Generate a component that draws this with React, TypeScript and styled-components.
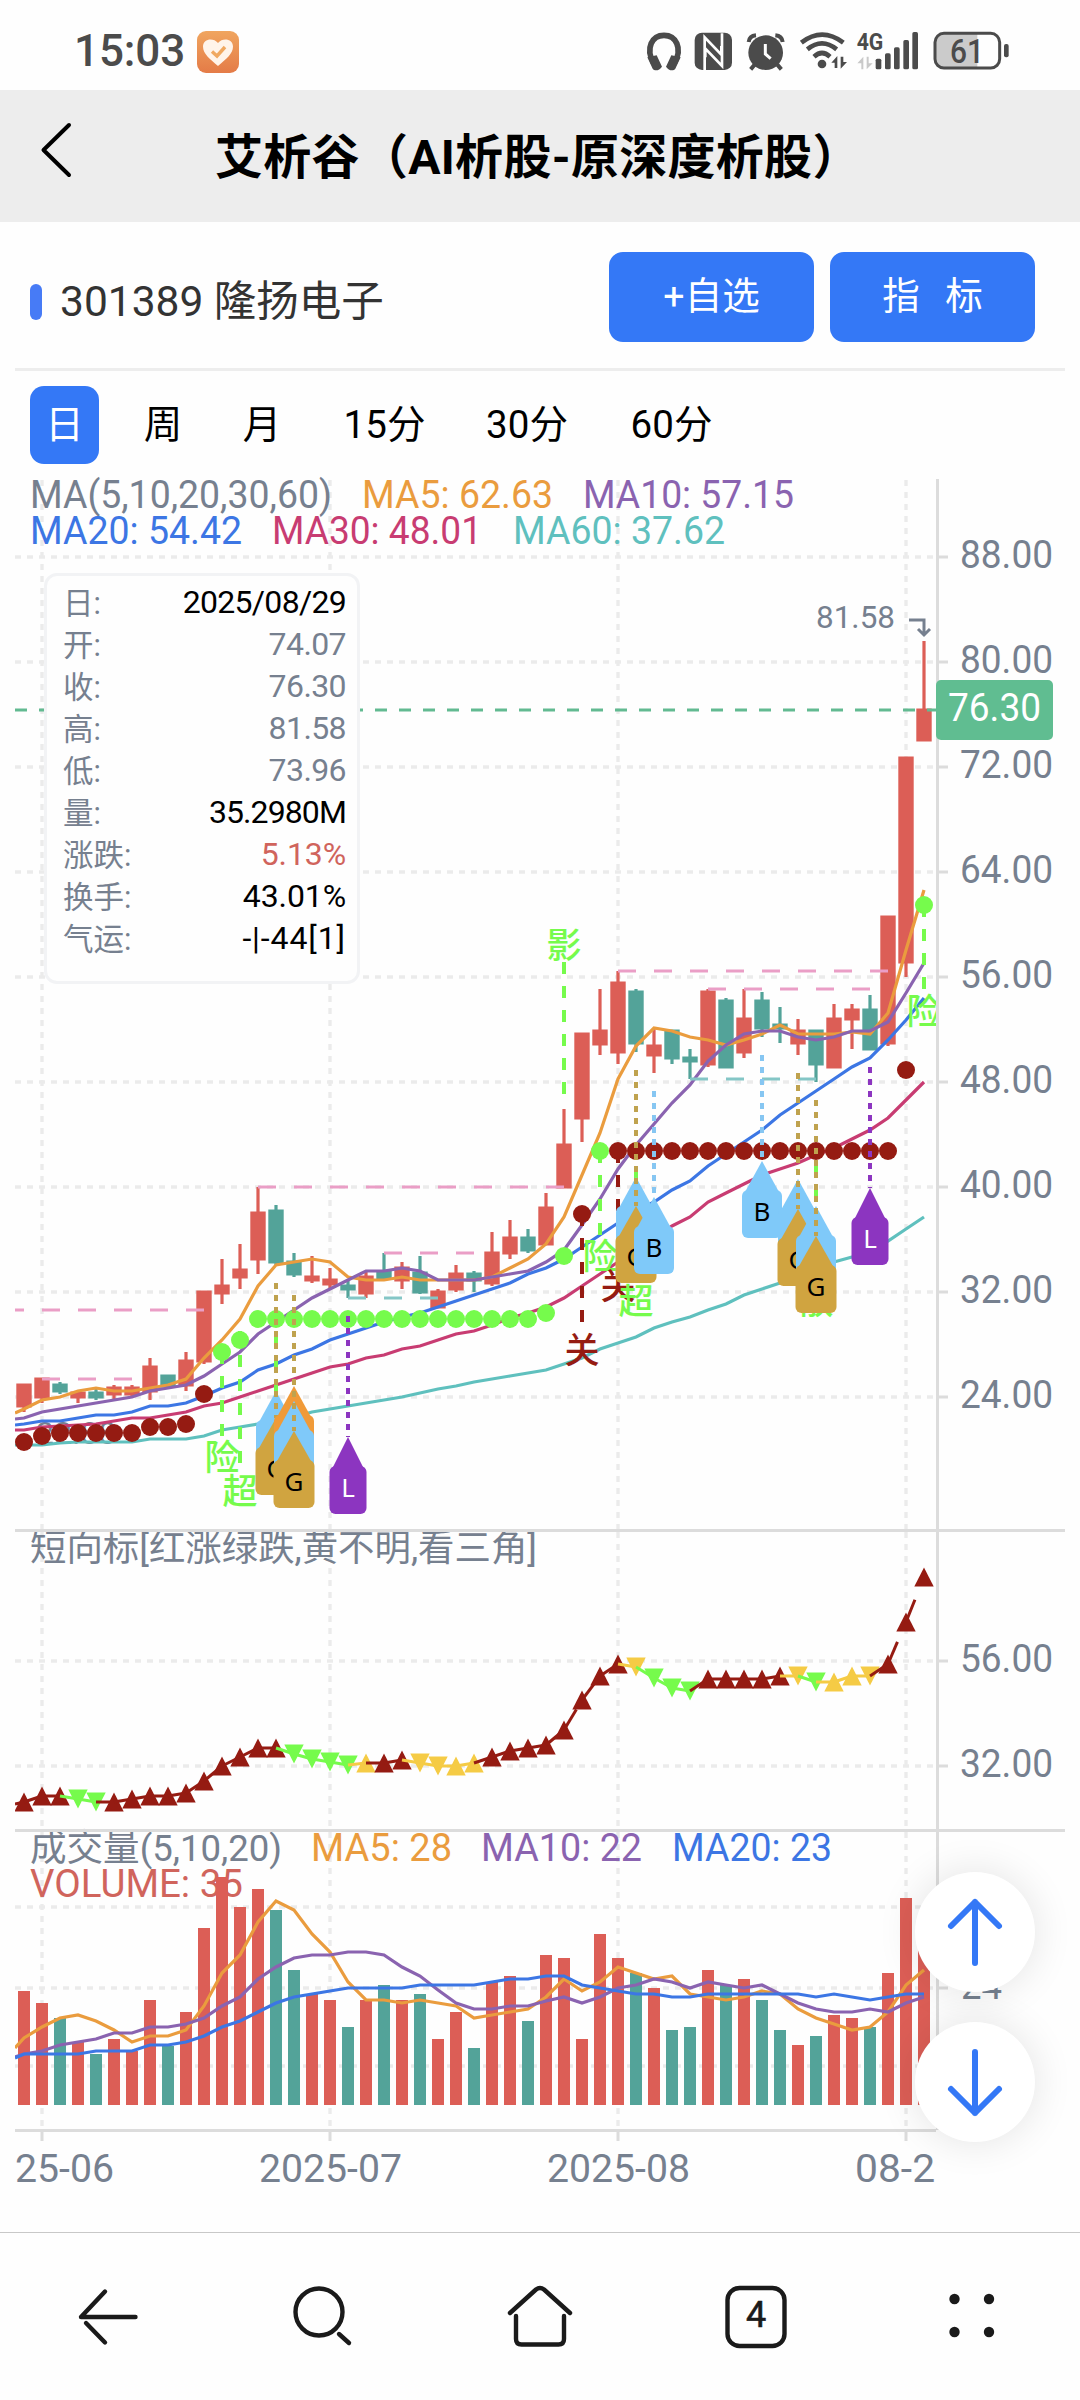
import React from "react";
import styled, { createGlobalStyle } from "styled-components";

const FONT = 'Roboto, "Noto Sans CJK SC", sans-serif';
const RED = "#dc5e56";
const GREEN = "#53a399";
const GRAY = "#76808f";
const BLUE = "#3478f6";
const ORANGE = "#ea9c3e";
const PURPLE = "#8a63b0";
const LINE_BLUE = "#3c76e4";
const MAGENTA = "#c83c72";
const TEAL = "#5fc0be";
const DARK_RED = "#951b12";
const LIME = "#76fb4c";
const YELLOW = "#f5cb45";
const INK = "#4b4b4b";

const GlobalStyle = createGlobalStyle`
  * { box-sizing: border-box; }
  body { margin: 0; background: #fefefe; }
`;

const Page = styled.div`
  width: 1080px;
  height: 2400px;
  display: flex;
  flex-direction: column;
  overflow: hidden;
  background: #fefefe;
  font-family: ${FONT};
  color: #000;
`;

/* ---------- status bar ---------- */

const StatusBar = styled.header`
  height: 90px;
  flex: none;
  display: flex;
  align-items: flex-start;
  justify-content: space-between;
  padding: 31px 70px 0 74px;
`;

const StatusLeft = styled.div`
  display: flex;
  align-items: center;
  gap: 12px;
  height: 41px;
`;

const Clock = styled.span`
  font-size: 44px;
  line-height: 41px;
  font-weight: 500;
  letter-spacing: -0.1px;
  color: ${INK};
`;

const StatusIcons = styled.svg`
  width: 380px;
  height: 64px;
  margin: -11px -6px 0 0;
`;

/* ---------- title bar ---------- */

const TitleBar = styled.div`
  height: 132px;
  flex: none;
  display: flex;
  align-items: center;
  background: #ededed;
`;

const BackIcon = styled.svg`
  width: 40px;
  height: 60px;
  margin: -13px 0 0 36px;
  flex: none;
`;

const Title = styled.h1`
  margin: 3px 0 0 139px;
  font-size: 48px;
  line-height: 60px;
  font-weight: 700;
  letter-spacing: 0.3px;
  white-space: nowrap;
`;

/* ---------- stock row ---------- */

const StockRow = styled.section`
  height: 149px;
  flex: none;
  margin: 0 15px;
  padding: 30px 30px 0 15px;
  display: flex;
  align-items: flex-start;
  border-bottom: 3px solid #ededed;
`;

const StockName = styled.div`
  flex: 1;
  display: flex;
  align-items: center;
  gap: 18px;
  height: 100px;
  color: #333;
  &::before {
    content: "";
    width: 12px;
    height: 36px;
    border-radius: 6px;
    background: #477bf6;
  }
`;

const StockText = styled.span`
  font-size: 42.5px;
  line-height: 60px;
  white-space: pre;
`;

const ActionButton = styled.button<{ $gap?: number }>`
  width: 205px;
  height: 90px;
  margin-left: 16px;
  padding: 0 0 10px;
  border: 0;
  border-radius: 14px;
  background: ${BLUE};
  color: #fff;
  font-family: inherit;
  font-size: 37.5px;
  word-spacing: ${(p) => p.$gap ?? 0}px;
`;

/* ---------- period tabs ---------- */

const Tabs = styled.nav`
  height: 101px;
  flex: none;
  display: flex;
  align-items: flex-start;
  padding: 15px 0 0 30px;
`;

const Tab = styled.button<{ $active?: boolean; $w: number }>`
  width: ${(p) => p.$w}px;
  height: 78px;
  padding: 0 0 8px;
  border: 0;
  border-radius: 14px;
  background: ${(p) => (p.$active ? BLUE : "transparent")};
  color: ${(p) => (p.$active ? "#fff" : "#000")};
  font-family: inherit;
  font-size: 38.5px;
`;

/* ---------- chart ---------- */

const ChartArea = styled.main`
  position: relative;
  height: 1760px;
  flex: none;
`;

const ChartSvg = styled.svg`
  display: block;
  width: 1080px;
  height: 1760px;
  font-family: ${FONT};
`;

const Tooltip = styled.dl`
  position: absolute;
  left: 44px;
  top: 101px;
  width: 316px;
  height: 411px;
  margin: 0;
  padding: 5px 11px 0 16px;
  border: 3px solid #f2f3f5;
  border-radius: 13px;
  background: #fefefe;
`;

const TipRow = styled.div`
  display: flex;
  justify-content: space-between;
  align-items: center;
  height: 42px;
`;

const TipLabel = styled.dt`
  padding-bottom: 2px;
  font-size: 30.5px;
  color: ${GRAY};
`;

const TipValue = styled.dd<{ $color: string; $spacing?: number }>`
  margin: 0;
  font-size: 32px;
  letter-spacing: ${(p) => p.$spacing ?? -0.6}px;
  color: ${(p) => p.$color};
`;

const FloatButton = styled.button<{ $top: number }>`
  position: absolute;
  left: 915px;
  top: ${(p) => p.$top}px;
  width: 120px;
  height: 120px;
  padding: 0;
  border: 0;
  border-radius: 50%;
  background: #fff;
  box-shadow: 0 0 40px rgba(0, 0, 0, 0.11);
  svg {
    display: block;
    width: 120px;
    height: 120px;
  }
`;

/* ---------- browser navigation ---------- */

const BottomNav = styled.nav`
  height: 168px;
  flex: none;
  border-top: 1px solid #c8c8c8;
  display: flex;
  justify-content: space-around;
  padding: 44px 0 0;
`;

const NavIcon = styled.svg`
  width: 80px;
  height: 80px;
  fill: none;
  stroke: #1a1a1a;
  stroke-width: 4.4;
  stroke-linecap: round;
  stroke-linejoin: round;
  font-family: ${FONT};
`;

/* ---------- data ---------- */

const cx = (i: number) => 24 + 18 * i;

type Candle = [up: 0 | 1, top: number, bottom: number, high: number, low: number];

const candles: Candle[] = [
  [1, 1384, 1407, 1384, 1412], [1, 1378, 1398, 1378, 1403], [0, 1384, 1392, 1382, 1394],
  [1, 1392, 1398, 1390, 1403], [0, 1392, 1398, 1388, 1400], [1, 1387, 1395, 1385, 1399],
  [1, 1387, 1395, 1385, 1397], [1, 1366, 1392, 1358, 1400], [0, 1375, 1387, 1375, 1387],
  [1, 1360, 1386, 1352, 1391], [1, 1291, 1362, 1291, 1364], [1, 1285, 1294, 1259, 1304],
  [1, 1269, 1278, 1244, 1289], [1, 1212, 1260, 1187, 1274], [0, 1210, 1263, 1205, 1265],
  [0, 1261, 1275, 1253, 1277], [1, 1276, 1281, 1256, 1283], [1, 1279, 1285, 1268, 1289],
  [0, 1285, 1290, 1280, 1298], [1, 1276, 1294, 1272, 1298], [0, 1271, 1279, 1253, 1280],
  [1, 1267, 1281, 1262, 1289], [0, 1272, 1293, 1256, 1294], [1, 1291, 1308, 1289, 1308],
  [1, 1273, 1290, 1265, 1292], [0, 1273, 1281, 1271, 1292], [1, 1252, 1284, 1232, 1286],
  [1, 1237, 1254, 1220, 1259], [0, 1237, 1251, 1229, 1253], [1, 1207, 1245, 1193, 1245],
  [1, 1144, 1188, 1109, 1188], [1, 1033, 1119, 1033, 1142], [1, 1030, 1045, 989, 1055],
  [1, 982, 1053, 971, 1064], [0, 991, 1044, 989, 1052], [1, 1045, 1056, 1028, 1073],
  [0, 1030, 1059, 1030, 1064], [0, 1057, 1062, 1049, 1079], [1, 991, 1065, 989, 1067],
  [0, 1000, 1068, 998, 1068], [1, 1018, 1053, 989, 1058], [0, 1000, 1029, 992, 1037],
  [0, 1024, 1029, 1007, 1043], [1, 1030, 1044, 1019, 1055], [0, 1030, 1065, 1030, 1082],
  [1, 1018, 1068, 1004, 1068], [1, 1009, 1020, 1004, 1049], [0, 1009, 1050, 995, 1050],
  [1, 916, 1044, 916, 1046], [1, 757, 963, 757, 977], [1, 709, 741, 641, 741],
];

// The first value of each series lies on the plot's left edge, the rest on candle centres.
const priceLines: [string, number[]][] = [
  [TEAL, [1445, 1445, 1445, 1443, 1442, 1442, 1442, 1442, 1439, 1439, 1439, 1436, 1430, 1427, 1424, 1421, 1417, 1412, 1409, 1406, 1403, 1400, 1397, 1393, 1389, 1386, 1382, 1379, 1376, 1373, 1370, 1364, 1358, 1349, 1343, 1337, 1328, 1322, 1317, 1310, 1304, 1295, 1289, 1283, 1277, 1269, 1262, 1257, 1250, 1241, 1229, 1217]],
  [MAGENTA, [1430, 1430, 1427, 1426, 1425, 1424, 1421, 1418, 1418, 1415, 1412, 1406, 1403, 1397, 1391, 1385, 1379, 1373, 1367, 1364, 1358, 1355, 1349, 1346, 1340, 1334, 1331, 1325, 1318, 1313, 1307, 1298, 1286, 1274, 1262, 1250, 1238, 1226, 1217, 1202, 1193, 1184, 1175, 1169, 1163, 1155, 1148, 1139, 1130, 1118, 1100, 1082]],
  [LINE_BLUE, [1425, 1424, 1421, 1421, 1418, 1415, 1415, 1412, 1406, 1406, 1403, 1396, 1388, 1382, 1370, 1364, 1355, 1349, 1340, 1334, 1328, 1322, 1317, 1313, 1307, 1301, 1295, 1289, 1283, 1274, 1268, 1259, 1247, 1235, 1223, 1211, 1202, 1190, 1181, 1166, 1154, 1142, 1130, 1115, 1103, 1091, 1079, 1067, 1058, 1040, 1020, 998]],
  [ORANGE, [1413, 1409, 1400, 1397, 1391, 1388, 1391, 1391, 1388, 1385, 1379, 1358, 1340, 1319, 1286, 1265, 1262, 1259, 1262, 1277, 1280, 1280, 1277, 1280, 1280, 1280, 1280, 1277, 1268, 1259, 1244, 1217, 1175, 1133, 1079, 1046, 1028, 1031, 1037, 1040, 1045, 1040, 1034, 1025, 1034, 1034, 1034, 1032, 1034, 1013, 950, 890]],
  [PURPLE, [1419, 1418, 1412, 1409, 1406, 1403, 1400, 1397, 1391, 1388, 1385, 1376, 1364, 1352, 1334, 1322, 1310, 1298, 1289, 1280, 1271, 1271, 1268, 1271, 1280, 1280, 1280, 1277, 1274, 1271, 1262, 1250, 1225, 1199, 1169, 1145, 1124, 1103, 1085, 1061, 1045, 1034, 1031, 1031, 1037, 1040, 1037, 1031, 1031, 1022, 993, 963]],
];

const dots: [string, number, number, number][] = [
  [DARK_RED, 0, 0, 1442], [DARK_RED, 1, 1, 1436], [DARK_RED, 2, 6, 1433], [DARK_RED, 7, 8, 1427],
  [DARK_RED, 9, 9, 1424], [DARK_RED, 10, 10, 1394], [LIME, 11, 11, 1352], [LIME, 12, 12, 1340],
  [LIME, 13, 28, 1319], [LIME, 29, 29, 1313], [LIME, 30, 30, 1256], [DARK_RED, 31, 31, 1214],
  [LIME, 32, 32, 1151], [DARK_RED, 33, 48, 1151], [DARK_RED, 49, 49, 1070], [LIME, 50, 50, 905],
];

const levels: [string, number, number, number][] = [
  ["#ea9ec6", 1310, 6, 204], ["#ea9ec6", 1379, 42, 132], ["#ea9ec6", 1187, 258, 564],
  ["#ea9ec6", 1253, 384, 474], ["#ea9ec6", 971, 618, 888], ["#ea9ec6", 989, 708, 870],
  ["#84c6c6", 1298, 348, 438], ["#84c6c6", 1079, 690, 816],
];

type Signal = [color: string, i: number, from: number, to: number, char: string, charY: number];

const signals: Signal[] = [
  [LIME, 11, 1352, 1437, "险", 1457], [LIME, 12, 1331, 1463, "超", 1491], [LIME, 14, 1331, 1391, "", 0],
  [LIME, 30, 962, 1095, "影", 945], [DARK_RED, 31, 1214, 1323, "关", 1350], [LIME, 32, 1151, 1235, "险", 1256],
  [DARK_RED, 33, 1151, 1260, "关", 1286], [LIME, 34, 1148, 1180, "超", 1301], [LIME, 44, 1160, 1210, "散", 1301],
  [LIME, 50, 905, 990, "险", 1011],
];

const SKY = "#7fc9f9";
const GOLD = "#d0a440";
const GOLD_LINE = "#bfa24e";
const VIOLET = "#8c35c0";

type Flag = { i: number; from: number; line: string; tags: [string, number, string][] };

const flags: Flag[] = [
  { i: 14, from: 1283, line: GOLD_LINE, tags: [[SKY, 1391, ""], [GOLD, 1418, "G"]] },
  { i: 15, from: 1295, line: GOLD_LINE, tags: [["#f09a38", 1386, ""], [SKY, 1401, ""], [GOLD, 1431, "G"]] },
  { i: 18, from: 1316, line: VIOLET, tags: [[VIOLET, 1437, "L"]] },
  { i: 34, from: 1070, line: GOLD_LINE, tags: [[SKY, 1177, ""], [GOLD, 1206, "G"]] },
  { i: 35, from: 1091, line: "#86c6f2", tags: [[SKY, 1197, "B"]] },
  { i: 41, from: 1055, line: "#86c6f2", tags: [[SKY, 1161, "B"]] },
  { i: 43, from: 1073, line: GOLD_LINE, tags: [[SKY, 1179, ""], [GOLD, 1209, "G"]] },
  { i: 44, from: 1100, line: GOLD_LINE, tags: [[SKY, 1206, ""], [GOLD, 1236, "G"]] },
  { i: 47, from: 1067, line: VIOLET, tags: [[VIOLET, 1188, "L"]] },
];

// r/g/y: line colour, upper case for a triangle that points down.
const trendKinds = "rrrGGrrrrrrrrrrGGGGyrrYYyyrrrrrrrrYGGGrrrrrYGyyYrrr";
const trendY = [
  1802, 1796, 1796, 1799, 1802, 1802, 1799, 1796, 1796, 1793, 1781, 1766, 1757, 1748, 1748, 1754, 1759,
  1762, 1765, 1763, 1763, 1760, 1763, 1766, 1766, 1763, 1757, 1751, 1748, 1745, 1730, 1700, 1676, 1664,
  1667, 1678, 1688, 1691, 1679, 1679, 1679, 1679, 1676, 1676, 1682, 1682, 1676, 1676, 1664, 1622, 1577,
];
const trendColor: Record<string, string> = { r: DARK_RED, g: LIME, y: YELLOW };

const volumeTops = [
  1991, 2003, 2018, 2042, 2054, 2039, 2051, 2000, 2046, 2012, 1928, 1877, 1907, 1889, 1910, 1970, 1994,
  2000, 2027, 2000, 1985, 2000, 1994, 2039, 2012, 2048, 1982, 1976, 2021, 1955, 1958, 2039, 1934, 1958,
  1973, 1988, 2030, 2027, 1970, 1985, 1979, 2000, 2030, 2045, 2036, 2015, 2018, 2027, 1973, 1898, 1934,
];
const volumeKinds = "rrgrgrrrgrrrrrggrrgrgrgrrgrrgrrrrrgrggrgrggrgrrgrrr";

const volumeLines: [string, number[]][] = [
  [ORANGE, [2048, 2038, 2027, 2018, 2015, 2021, 2030, 2042, 2036, 2036, 2030, 2006, 1973, 1955, 1922, 1901, 1910, 1934, 1952, 1982, 2000, 2000, 2003, 2000, 2003, 2006, 2018, 2015, 2012, 2009, 1997, 1979, 1991, 1982, 1967, 1973, 1979, 1976, 1994, 1997, 2000, 1997, 1991, 1994, 2009, 2018, 2024, 2030, 2027, 2012, 1985, 1970]],
  [PURPLE, [2057, 2054, 2051, 2045, 2042, 2039, 2033, 2033, 2027, 2027, 2024, 2018, 2006, 1997, 1979, 1967, 1958, 1955, 1955, 1952, 1952, 1955, 1967, 1976, 1990, 2003, 2009, 2009, 2006, 2006, 2001, 1997, 2003, 1997, 1988, 1985, 1979, 1982, 1988, 1982, 1985, 1988, 1985, 1994, 2003, 2009, 2012, 2012, 2009, 2012, 2003, 1997]],
  [LINE_BLUE, [2058, 2054, 2054, 2054, 2054, 2051, 2051, 2051, 2045, 2045, 2042, 2036, 2027, 2021, 2012, 2003, 1997, 1994, 1991, 1988, 1988, 1988, 1988, 1985, 1985, 1985, 1985, 1982, 1979, 1979, 1976, 1976, 1985, 1988, 1991, 1994, 1994, 1997, 1997, 1994, 1994, 1994, 1994, 1994, 1994, 1997, 1994, 1997, 2000, 1997, 1994, 1994]],
];

const tipRows: [label: string, value: string, color: string, spacing?: number][] = [
  ["日:", "2025/08/29", "#000", -0.7],
  ["开:", "74.07", GRAY],
  ["收:", "76.30", GRAY],
  ["高:", "81.58", GRAY],
  ["低:", "73.96", GRAY],
  ["量:", "35.2980M", "#000", -0.9],
  ["涨跌:", "5.13%", "#d0645c", -0.1],
  ["换手:", "43.01%", "#000", -0.1],
  ["气运:", "-|-44[1]", "#000", 0.9],
];

/* ---------- chart pieces ---------- */

const Label = ({ x0, x1, y, fill = GRAY, size = 38, children }: {
  x0: number; x1: number; y: number; fill?: string; size?: number; children: string;
}) => (
  <text x={x0 - 2} y={y} fill={fill} fontSize={size} textLength={x1 - x0 + 4} lengthAdjust="spacingAndGlyphs">
    {children}
  </text>
);

const Series = ({ color, ys }: { color: string; ys: number[] }) => (
  <polyline
    fill="none"
    stroke={color}
    strokeWidth={3.2}
    points={ys.map((y, i) => `${i === 0 ? 15 : cx(i - 1)},${y}`).join(" ")}
  />
);

const Grid = () => (
  <g stroke="#ebebeb" strokeWidth={3.4} strokeDasharray="6 6" fill="none">
    {[557, 662, 767, 872, 977, 1082, 1187, 1292, 1397, 1661, 1766, 1907, 1988, 2066].map((y) => (
      <path key={y} d={`M15 ${y}H936`} />
    ))}
    {[42, 330, 618, 906].map((x) => (
      <path key={x} d={`M${x} 480V1530M${x} 1532V1830M${x} 1832V2130`} />
    ))}
  </g>
);

const Axes = () => (
  <g stroke="#dcdcdc" strokeWidth={3} fill="none">
    <path d="M937.5 479V2130M15 1530.5H1065M15 1830.5H1065M15 2130.5H936" />
    {[557, 662, 767, 872, 977, 1082, 1187, 1292, 1397, 1661, 1766, 1988].map((y) => (
      <path key={y} d={`M939 ${y}H948`} />
    ))}
    {[42, 330, 618, 906].map((x) => (
      <path key={x} d={`M${x} 2132V2141`} />
    ))}
  </g>
);

const FlagTag = ({ x, tip, color, label }: { x: number; tip: number; color: string; label: string }) => {
  const half = color === VIOLET ? 18.5 : color === GOLD ? 20.5 : 20;
  return (
    <g>
      <path d={`M${x} ${tip}L${x + half - 3} ${tip + 31}H${x - half + 3}Z`} fill={color} />
      <rect x={x - half} y={tip + 29} width={half * 2} height={48} rx={6} fill={color} />
      <text x={x} y={tip + 60} fontSize={26} textAnchor="middle" fill={color === VIOLET ? "#fff" : "#000"}
        fontFamily='"Noto Sans", sans-serif'>
        {label}
      </text>
    </g>
  );
};

const PricePanel = () => (
  <g clipPath="url(#plot)">
    <text x={36} y={1444} fontSize={32} fill={GRAY}>22.88</text>
    {candles.map(([up, top, bottom, high, low], i) => (
      <g key={i} fill={up ? RED : GREEN}>
        <rect x={cx(i) - 1.6} y={high} width={3.2} height={low - high} />
        <rect x={cx(i) - 7.7} y={top - 0.5} width={15.4} height={bottom - top + 1} />
      </g>
    ))}
    {priceLines.map(([color, ys]) => <Series key={color} color={color} ys={ys} />)}
    {levels.map(([color, y, x0, x1]) => (
      <path key={`${y}`} d={`M${x0} ${y}H${x1}`} stroke={color} strokeWidth={3} strokeDasharray="18 18" />
    ))}
    {signals.map(([color, i, from, to]) => (
      <path key={i} d={`M${cx(i)} ${from}V${to}`} stroke={color} strokeWidth={4} strokeDasharray="12 12" />
    ))}
    {dots.map(([color, a, b, y]) =>
      Array.from({ length: b - a + 1 }, (_, k) => (
        <circle key={`${a + k}`} cx={cx(a + k)} cy={y} r={9} fill={color} />
      ))
    )}
    {signals.map(([color, i, , , char, y]) => (
      <text key={i} x={cx(i)} y={y + 13} fontSize={35} fontWeight={500} textAnchor="middle" fill={color}>{char}</text>
    ))}
    {flags.map(({ i, from, line, tags }) => {
      const last = tags[tags.length - 1];
      return (
        <g key={i}>
          {tags.slice(0, -1).map(([c, tip, l], k) => <FlagTag key={k} x={cx(i)} tip={tip} color={c} label={l} />)}
          <path d={`M${cx(i)} ${from}V${last[1]}`} stroke={line} strokeWidth={4} strokeDasharray="6 6" />
          <FlagTag x={cx(i)} tip={last[1]} color={last[0]} label={last[2]} />
        </g>
      );
    })}
  </g>
);

const LastPrice = () => (
  <g>
    <path d="M15 710H936" stroke="#62ba91" strokeWidth={3} strokeDasharray="12 12" />
    <rect x={936} y={680} width={117} height={60} rx={5} fill="#60bd91" />
    <Label x0={950} x1={1039} y={721} fill="#fff">76.30</Label>
    <Label x0={818} x1={893} y={628} size={32}>81.58</Label>
    <path d="M909 620H924V634M918 629L924 635L930 629" fill="none" stroke={GRAY} strokeWidth={3} />
  </g>
);

const TrendPanel = () => (
  <g clipPath="url(#plot)">
    {trendY.map((y, i) => {
      const kind = trendKinds[i];
      const color = trendColor[kind.toLowerCase()];
      const d = kind === kind.toUpperCase() ? -1 : 1;
      const x = cx(i);
      const px = i === 0 ? 15 : cx(i - 1);
      const py = i === 0 ? 1804 : trendY[i - 1];
      return (
        <g key={i}>
          <path d={`M${px} ${py}L${x} ${y}`} stroke={color} strokeWidth={3} strokeDasharray="24 24" />
          <path d={`M${x} ${y - 9.5 * d}L${x + 9.7} ${y + 9.5 * d}H${x - 9.7}Z`} fill={color} />
        </g>
      );
    })}
  </g>
);

const VolumePanel = () => (
  <g clipPath="url(#plot)">
    {volumeTops.map((y, i) => (
      <rect key={i} x={cx(i) - 6} y={y} width={12} height={2105 - y} fill={volumeKinds[i] === "r" ? RED : GREEN} />
    ))}
    {volumeLines.map(([color, ys]) => <Series key={color} color={color} ys={ys} />)}
  </g>
);

const Legends = () => (
  <g>
    <Label x0={32} x1={330} y={508}>MA(5,10,20,30,60)</Label>
    <Label x0={364} x1={551} y={508} fill={ORANGE}>MA5: 62.63</Label>
    <Label x0={585} x1={792} y={508} fill={PURPLE}>MA10: 57.15</Label>
    <Label x0={32} x1={240} y={544} fill={LINE_BLUE}>MA20: 54.42</Label>
    <Label x0={274} x1={480} y={544} fill={MAGENTA}>MA30: 48.01</Label>
    <Label x0={515} x1={723} y={544} fill={TEAL}>MA60: 37.62</Label>
    <Label x0={32} x1={535} y={1561} size={36}>短向标[红涨绿跌,黄不明,看三角]</Label>
    <Label x0={32} x1={280} y={1861} size={37}>成交量(5,10,20)</Label>
    <Label x0={313} x1={450} y={1861} fill={ORANGE}>MA5: 28</Label>
    <Label x0={483} x1={640} y={1861} fill={PURPLE}>MA10: 22</Label>
    <Label x0={674} x1={830} y={1861} fill={LINE_BLUE}>MA20: 23</Label>
    <Label x0={32} x1={241} y={1897} fill="#d0645c">VOLUME: 35</Label>
  </g>
);

const AxisLabels = () => (
  <g>
    {[88, 80, 72, 64, 56, 48, 40, 32, 24].map((v, k) => (
      <Label key={v} x0={962} x1={1051} y={568 + 105 * k}>{`${v}.00`}</Label>
    ))}
    <Label x0={962} x1={1051} y={1672}>56.00</Label>
    <Label x0={962} x1={1051} y={1777}>32.00</Label>
    <Label x0={963} x1={1000} y={1999}>24</Label>
    <g clipPath="url(#plot)">
      <Label x0={-27} x1={112} y={2182}>2025-06</Label>
      <Label x0={261} x1={400} y={2182}>2025-07</Label>
      <Label x0={549} x1={688} y={2182}>2025-08</Label>
      <Label x0={857} x1={956} y={2182}>08-28</Label>
    </g>
  </g>
);

const StatusGlyphs = () => (
  <StatusIcons viewBox="0 0 1140 192" fill={INK}>
    <path d="M52 128C28 84 48 46 84 46C120 46 140 84 116 128" fill="none" stroke={INK} strokeWidth={17} />
    <path d="M34 112L62 106L78 140C70 152 56 154 50 146Z M134 112L106 106L90 140C98 152 112 154 118 146Z" />
    <rect x={176} y={38} width={112} height={112} rx={22} />
    <path d="M206 150V52L256 104V78M258 40V138L208 86V112" fill="none" stroke="#fefefe" strokeWidth={8} />
    <circle cx={389} cy={98} r={52} />
    <path d="M388 72V102L404 116" fill="none" stroke="#fefefe" strokeWidth={9} />
    <path d="M338 66Q340 48 360 46M440 66Q438 48 418 46M356 134L344 148M424 134L436 148" fill="none" stroke={INK} strokeWidth={12} />
    <path d="M496 68Q558 20 622 68M514 88Q558 52 602 88M534 110Q558 88 582 110" fill="none" stroke={INK} strokeWidth={14} />
    <circle cx={558} cy={132} r={13} />
    <path d="M586 128L604 108V144H596V128ZM633 126L614 146V110H622V126Z" />
    <text x={662} y={91} fontSize={72} fontWeight={700} fontFamily={FONT} textLength={80} lengthAdjust="spacingAndGlyphs">4G</text>
    <path d="M664 130L682 110V148H676V130ZM710 130L692 148V110H698V130Z" fill="#c9c9c9" />
    <rect x={719} y={116} width={17} height={32} rx={5} />
    <rect x={747} y={100} width={17} height={48} rx={5} />
    <rect x={774} y={82} width={17} height={66} rx={5} />
    <rect x={802} y={60} width={17} height={88} rx={5} />
    <rect x={829} y={36} width={17} height={112} rx={5} />
    <path d="M1024 40H924Q898 40 898 66V118Q898 144 924 144H1024Z" fill="#cbcbcb" />
    <rect x={897} y={40} width={194} height={104} rx={27} fill="none" stroke={INK} strokeWidth={9} />
    <rect x={1104} y={72} width={14} height={40} rx={6} />
    <text x={942} y={128} fontSize={102} fontWeight={500} fontFamily={FONT} textLength={102} lengthAdjust="spacingAndGlyphs">61</text>
  </StatusIcons>
);

export default function App() {
  return (
    <Page>
      <GlobalStyle />
      <StatusBar>
        <StatusLeft>
          <Clock>15:03</Clock>
          <svg width={42} height={42} viewBox="0 0 42 42">
            <defs>
              <linearGradient id="badge" x1="0" y1="0" x2="0" y2="1">
                <stop offset="0" stopColor="#f0a55f" />
                <stop offset="1" stopColor="#e47b47" />
              </linearGradient>
            </defs>
            <rect width={42} height={42} rx={9} fill="url(#badge)" />
            <path d="M21 35C13 28 6 23 6 15.5C6 8 16 6 21 12C26 6 36 8 36 15.5C36 23 29 28 21 35Z" fill="#fff4ea" />
            <path d="M15 20.5L20 25L28 16" fill="none" stroke="#f0a860" strokeWidth={3.4} />
          </svg>
        </StatusLeft>
        <StatusGlyphs />
      </StatusBar>

      <TitleBar>
        <BackIcon viewBox="0 0 40 60" fill="none" stroke="#000" strokeWidth={4}>
          <path d="M33 5L7.500 30L33 55" strokeLinecap="round" strokeLinejoin="round" />
        </BackIcon>
        <Title>艾析谷（AI析股-原深度析股）</Title>
      </TitleBar>

      <StockRow>
        <StockName>
          <StockText>301389 隆扬电子</StockText>
        </StockName>
        <ActionButton>+自选</ActionButton>
        <ActionButton $gap={16}>指 标</ActionButton>
      </StockRow>

      <Tabs>
        <Tab $active $w={69}>日</Tab>
        <Tab $w={128}>周</Tab>
        <Tab $w={70}>月</Tab>
        <Tab $w={175}>15分</Tab>
        <Tab $w={110}>30分</Tab>
        <Tab $w={179}>60分</Tab>
      </Tabs>

      <ChartArea>
        <ChartSvg viewBox="0 472 1080 1760">
          <defs>
            <clipPath id="plot">
              <rect x={15} y={472} width={921} height={1760} />
            </clipPath>
          </defs>
          <Grid />
          <Legends />
          <Axes />
          <PricePanel />
          <LastPrice />
          <TrendPanel />
          <VolumePanel />
          <AxisLabels />
        </ChartSvg>
        <Tooltip>
          {tipRows.map(([label, value, color, spacing]) => (
            <TipRow key={label}>
              <TipLabel>{label}</TipLabel>
              <TipValue $color={color} $spacing={spacing}>{value}</TipValue>
            </TipRow>
          ))}
        </Tooltip>
        <FloatButton $top={1400} aria-label="up">
          <svg viewBox="0 0 120 120" fill="none" stroke={BLUE} strokeWidth={6} strokeLinecap="round" strokeLinejoin="round">
            <path d="M60 91V30M36 54L60 30L84 54" />
          </svg>
        </FloatButton>
        <FloatButton $top={1550} aria-label="down">
          <svg viewBox="0 0 120 120" fill="none" stroke={BLUE} strokeWidth={6} strokeLinecap="round" strokeLinejoin="round">
            <path d="M60 30V91M36 67L60 91L84 67" />
          </svg>
        </FloatButton>
      </ChartArea>

      <BottomNav>
        <NavIcon viewBox="0 0 80 80">
          <path d="M67.500 40H13L37 14.500M18 46L37 65.500" />
        </NavIcon>
        <NavIcon viewBox="0 0 80 80">
          <circle cx={35} cy={35} r={23.5} />
          <path d="M55 57L65 66" />
        </NavIcon>
        <NavIcon viewBox="0 0 80 80">
          <path d="M10 36L36 12.500Q40 9.500 44 12.500L70 36M16 39V62Q16 67.500 21.500 67.500H58.500Q64 67.500 64 62V39" />
        </NavIcon>
        <NavIcon viewBox="0 0 80 80">
          <rect x={11.5} y={11} width={57} height={58} rx={12} />
          <text x={40} y={50} fontSize={36} textAnchor="middle" fill="#1a1a1a" stroke="#1a1a1a" strokeWidth={0.6}>4</text>
        </NavIcon>
        <NavIcon viewBox="0 0 80 80">
          <g fill="#1a1a1a" stroke="none">
            <circle cx={22.5} cy={22} r={5.2} />
            <circle cx={57} cy={22} r={5.2} />
            <circle cx={22.5} cy={55} r={5.2} />
            <circle cx={57} cy={55} r={5.2} />
          </g>
        </NavIcon>
      </BottomNav>
    </Page>
  );
}
